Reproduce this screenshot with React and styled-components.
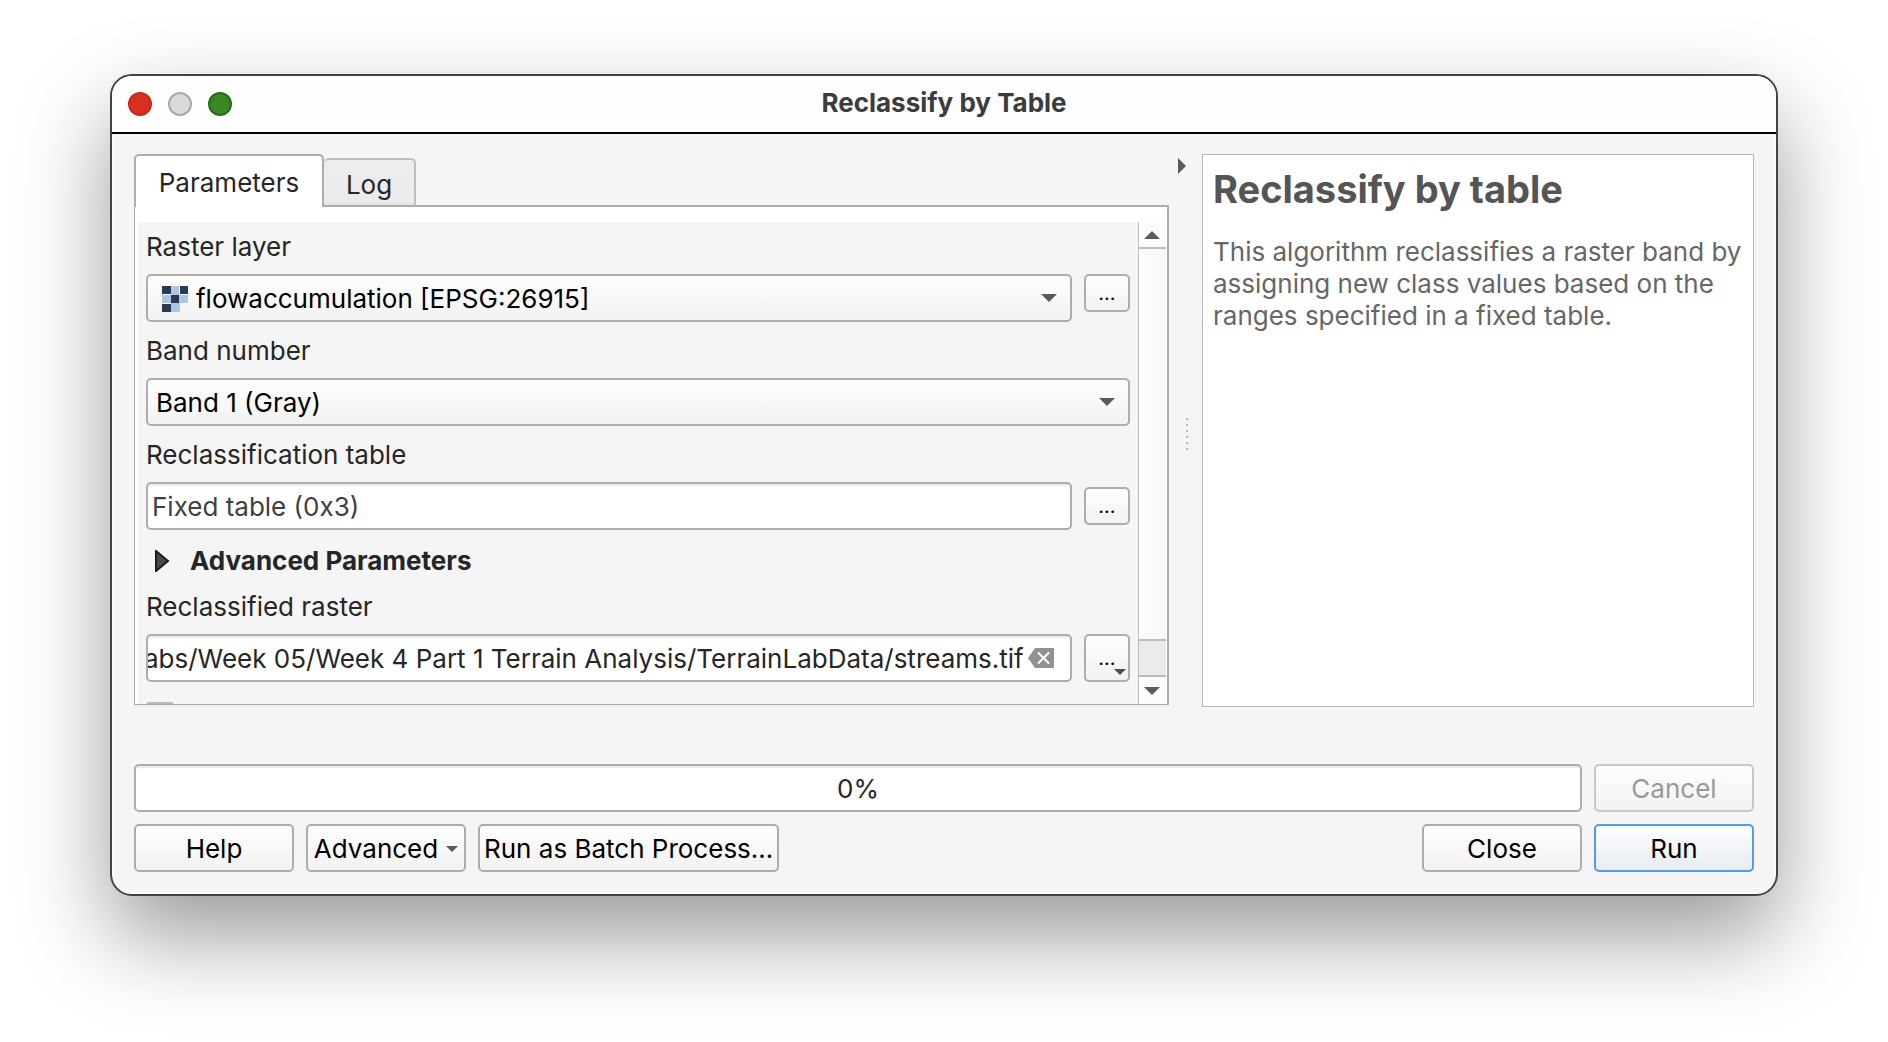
import React from "react";
import styled, { createGlobalStyle, css } from "styled-components";

const GlobalStyle = createGlobalStyle`
  *, *::before, *::after { box-sizing: border-box; }
  body {
    margin: 0;
    background: #ffffff;
    font-family: Inter, "Liberation Sans", sans-serif;
    font-size: 26px;
    line-height: 32px;
    color: #262626;
  }
  button, input, select { font: inherit; color: inherit; margin: 0; }
`;

const line = "#adadad";
const face = "linear-gradient(#fefefe, #f2f2f2)";

const Desktop = styled.main`
  display: flex;
  height: 100vh;
  min-height: 800px;
  padding: 74px 110px 146px;
  overflow: hidden;
`;

const Window = styled.section`
  flex: 1;
  min-width: 0;
  display: flex;
  flex-direction: column;
  border: 2px solid #434343;
  border-radius: 22px;
  background: #f5f5f5;
  overflow: hidden;
  box-shadow: inset 0 0 0 2px #fbfbfb, 0 40px 90px rgba(0, 0, 0, 0.4);
`;

const TitleBar = styled.header`
  display: grid;
  grid-template-columns: 1fr auto 1fr;
  align-items: center;
  height: 58px;
  padding: 0 16px;
  background: #fdfdfd;
  border-bottom: 2px solid #000000;
`;

const Lights = styled.div`
  display: flex;
  gap: 16px;
`;

const Light = styled.button`
  width: 24px;
  height: 24px;
  padding: 0;
  border: 2px solid ${(p) => p.$edge};
  border-radius: 50%;
  background: ${(p) => p.$fill};
`;

const Title = styled.h1`
  margin: 0;
  padding-bottom: 2px;
  font-size: 26px;
  line-height: 32px;
  font-weight: 700;
  color: #3c3c3c;
`;

const Body = styled.div`
  flex: 1;
  min-height: 0;
  display: flex;
  flex-direction: column;
  padding: 20px 22px 22px;
`;

const Split = styled.div`
  flex: 1;
  min-height: 0;
  display: grid;
  grid-template-columns: minmax(0, 1035fr) 33px minmax(0, 552fr);
  margin-bottom: 57px;
`;

const Tabbed = styled.div`
  display: flex;
  flex-direction: column;
  min-height: 0;
  padding-bottom: 2px;
`;

const TabList = styled.div`
  display: flex;
  align-items: flex-end;
  z-index: 1;
`;

const Tab = styled.button`
  height: ${(p) => (p.$active ? 53 : 47)}px;
  width: ${(p) => (p.$active ? 190 : 92)}px;
  padding: ${(p) => (p.$active ? 2 : 4)}px 0 0;
  margin-bottom: ${(p) => (p.$active ? -2 : 0)}px;
  border: 2px solid ${(p) => (p.$active ? line : "#bfbfbf")};
  border-bottom: 0;
  border-left-width: ${(p) => (p.$active ? 2 : 0)}px;
  border-radius: 5px 5px 0 0;
  background: ${(p) => (p.$active ? "#ffffff" : "linear-gradient(#ededed, #ebebeb 90%, #e4e4e4)")};
`;

const Pane = styled.div`
  flex: 1;
  min-height: 0;
  display: flex;
  padding: 15px 1px 0 3px;
  border: 2px solid ${line};
  border-left-width: 1px;
  border-bottom-width: 1px;
  background: #ffffff;
  box-shadow: 0 2px 0 #ededed;
`;

const Form = styled.form`
  flex: 1;
  min-width: 0;
  display: flex;
  flex-direction: column;
  gap: 12px;
  padding: 8px 8px 0;
  overflow: hidden;
  background: #f5f5f5;

  & > * { flex-shrink: 0; }
`;

const Label = styled.label`
  height: 32px;
  line-height: 34px;
`;

const Row = styled.div`
  display: flex;
  align-items: ${(p) => p.$align || "center"};
  gap: 12px;
`;

const Control = styled.div`
  position: relative;
  flex: 1;
  min-width: 0;
  height: 48px;
`;

const Select = styled.select`
  appearance: none;
  width: 100%;
  height: 48px;
  padding: 2px 40px 0 ${(p) => (p.$icon ? 48 : 8)}px;
  border: 2px solid ${line};
  border-radius: 5px;
  background: ${face};
  color: #000000;
`;

const field = css`
  border: 2px solid ${line};
  border-radius: 5px;
  background: #ffffff;
  box-shadow: inset 0 2px 0 #ebebeb;
`;

const TextBox = styled.input`
  ${field}
  width: 100%;
  height: 48px;
  padding: 0 ${(p) => (p.$clear ? 44 : 4)}px 0 ${(p) => (p.$clear ? 0 : 4)}px;
  text-indent: ${(p) => (p.$clear ? -4 : 0)}px;
  color: ${(p) => (p.$clear ? "#262626" : "#404040")};
`;

const Overlay = styled.svg`
  position: absolute;
  top: ${(p) => p.$top}px;
  left: ${(p) => (p.$left === undefined ? "auto" : p.$left + "px")};
  right: ${(p) => (p.$right === undefined ? "auto" : p.$right + "px")};
  pointer-events: none;
`;

const ClearButton = styled.button`
  position: absolute;
  top: 14px;
  right: 18px;
  width: 26px;
  height: 20px;
  padding: 0;
  border: 0;
  background: none;

  svg { display: block; }
`;

const MoreButton = styled.button`
  position: relative;
  width: 46px;
  height: ${(p) => (p.$tall ? 48 : 38)}px;
  padding: 0;
  border: 2px solid ${line};
  border-radius: 5px;
  background: ${face};
  font-size: 20px;
  color: #000000;
`;

const Disclosure = styled.button`
  display: flex;
  align-items: center;
  gap: 20px;
  height: 36px;
  padding: 2px 9px 0;
  border: 0;
  background: none;
  font-weight: 700;
  text-align: left;
`;

const OpenOption = styled.label`
  display: flex;
  align-items: center;
  gap: 12px;
  height: 44px;
`;

const CheckBox = styled.input`
  appearance: none;
  width: 28px;
  height: 28px;
  border: 2px solid #bbbbbb;
  border-radius: 3px;
  background: #ffffff;
`;

const ScrollBar = styled.div`
  display: flex;
  flex-direction: column;
  width: 28px;
  border-left: 1px solid #bdbdbd;
  background: linear-gradient(90deg, #fdfdfd, #f8f8f8);
`;

const ScrollButton = styled.button`
  display: flex;
  align-items: center;
  justify-content: center;
  height: 27px;
  padding: 0 2px 0 0;
  border: 0 solid #bdbdbd;
  border-bottom-width: ${(p) => (p.$up ? 2 : 0)}px;
  background: #fcfcfc;
`;

const ScrollTrack = styled.div`
  flex: 1;
  display: flex;
  flex-direction: column;
  justify-content: flex-end;
`;

const ScrollThumb = styled.div`
  height: 38px;
  border: 2px solid #bdbdbd;
  border-width: 2px 0;
  background: #ebebeb;
`;

const Splitter = styled.div`
  display: flex;
  flex-direction: column;
  align-items: center;
  justify-content: space-between;
`;

const CollapseButton = styled.button`
  align-self: flex-start;
  display: flex;
  height: 16px;
  padding: 0;
  margin: 4px 0 0 9px;
  border: 0;
  background: none;
`;

const Grip = styled.div`
  display: grid;
  gap: 4px;
  margin-left: 2px;

  i {
    width: 2px;
    height: 2px;
    background: #b8b8b8;
  }
`;

const Spacer = styled.div`
  height: 14px;
`;

const HelpPane = styled.aside`
  padding: 10px;
  border: 1px solid #b9b9b9;
  background: #ffffff;
  color: #666666;

  h2 {
    margin: 0;
    font-size: 38px;
    line-height: 48px;
    font-weight: 700;
    color: #555555;
  }
  p { margin: 23px 0 0; }
`;

const Footer = styled.footer`
  display: grid;
  gap: 12px;
`;

const Progress = styled.div`
  ${field}
  flex: 1;
  height: 48px;
  line-height: 46px;
  text-align: center;
`;

const PushButton = styled.button`
  display: flex;
  align-items: center;
  justify-content: center;
  gap: 8px;
  min-width: 160px;
  height: 48px;
  padding: 2px 4px 0;
  border: 2px solid ${(p) => (p.$primary ? "#5399e4" : line)};
  border-radius: 5px;
  background: ${(p) => (p.$primary ? "linear-gradient(#fefefe, #e8ebf2)" : face)};
  color: #000000;
  white-space: nowrap;

  &:disabled {
    border-color: #c8c8c8;
    color: #999999;
  }
`;

const Push = styled.span`
  flex: 1;
`;

const shapes = {
  down: (w, h) => `M0 0H${w}L${w / 2} ${h}Z`,
  up: (w, h) => `M0 ${h}H${w}L${w / 2} 0Z`,
  right: (w, h) => `M0 0V${h}L${w} ${h / 2}Z`,
};

function Triangle({ dir = "down", w = 16, h = 8, fill = "#5a5a5a" }) {
  return (
    <svg width={w} height={h} aria-hidden="true">
      <path d={shapes[dir](w, h)} fill={fill} />
    </svg>
  );
}

function SelectArrow() {
  return (
    <Overlay $top={20} $right={15} width="16" height="8" aria-hidden="true">
      <path d={shapes.down(16, 8)} fill="#5a5a5a" />
    </Overlay>
  );
}

function RasterIcon() {
  return (
    <Overlay $top={12} $left={16} width="26" height="26" viewBox="0 0 26 26" aria-hidden="true">
      <path fill="#adc6e5" d="M9 0h8v9h9v8h-8v9H9v-9H0V9h9z" />
      <path fill="#2b3a50" d="M0 0h9v8H0zM18 0h8v8h-8zM9 9h8v8H9zM0 18h9v8H0z" />
    </Overlay>
  );
}

export default function App() {
  return (
    <Desktop>
      <GlobalStyle />
      <Window>
        <TitleBar>
          <Lights>
            <Light aria-label="Close window" $fill="#da2e20" $edge="#c4291c" />
            <Light aria-label="Minimize window" $fill="#dadada" $edge="#a9a9a9" />
            <Light aria-label="Zoom window" $fill="#3b8724" $edge="#2a6a17" />
          </Lights>
          <Title>Reclassify by Table</Title>
        </TitleBar>
        <Body>
          <Split>
            <Tabbed>
              <TabList role="tablist">
                <Tab role="tab" aria-selected="true" $active>Parameters</Tab>
                <Tab role="tab" aria-selected="false">Log</Tab>
              </TabList>
              <Pane>
                <Form onSubmit={(e) => e.preventDefault()}>
                  <Label htmlFor="raster">Raster layer</Label>
                  <Row $align="flex-start">
                    <Control>
                      <Select id="raster" $icon>
                        <option>flowaccumulation [EPSG:26915]</option>
                      </Select>
                      <RasterIcon />
                      <SelectArrow />
                    </Control>
                    <MoreButton type="button" aria-label="Browse raster layer">...</MoreButton>
                  </Row>
                  <Label htmlFor="band">Band number</Label>
                  <Row>
                    <Control>
                      <Select id="band">
                        <option>Band 1 (Gray)</option>
                      </Select>
                      <SelectArrow />
                    </Control>
                  </Row>
                  <Label htmlFor="table">Reclassification table</Label>
                  <Row>
                    <Control>
                      <TextBox id="table" readOnly value="Fixed table (0x3)" />
                    </Control>
                    <MoreButton type="button" aria-label="Edit table">...</MoreButton>
                  </Row>
                  <Disclosure type="button" aria-expanded="false">
                    <svg width="15" height="22" viewBox="0 0 15 22" aria-hidden="true">
                      <path d="M1 1V21L13 11Z" fill="#4a4a4a" stroke="#1c1c1c" strokeWidth="2" />
                    </svg>
                    Advanced Parameters
                  </Disclosure>
                  <Label htmlFor="output">Reclassified raster</Label>
                  <Row>
                    <Control>
                      <TextBox
                        id="output"
                        $clear
                        defaultValue="abs/Week 05/Week 4 Part 1 Terrain Analysis/TerrainLabData/streams.tif"
                      />
                      <ClearButton type="button" aria-label="Clear">
                        <svg width="26" height="20" viewBox="0 0 26 20">
                          <path d="M0 10L7 0H26V20H7Z" fill="#929292" />
                          <path d="M10 4.500L21 15.500M21 4.500L10 15.500" stroke="#fff" strokeWidth="2" />
                        </svg>
                      </ClearButton>
                    </Control>
                    <MoreButton type="button" $tall aria-label="Output options">
                      ...
                      <Overlay $top={33} $right={2} width="12" height="6" aria-hidden="true">
                        <path d={shapes.down(12, 6)} fill="#4f4f4f" />
                      </Overlay>
                    </MoreButton>
                  </Row>
                  <OpenOption>
                    <CheckBox type="checkbox" aria-label="Open output file" />
                  </OpenOption>
                </Form>
                <ScrollBar>
                  <ScrollButton $up type="button" aria-label="Scroll up"><Triangle dir="up" /></ScrollButton>
                  <ScrollTrack><ScrollThumb /></ScrollTrack>
                  <ScrollButton type="button" aria-label="Scroll down"><Triangle /></ScrollButton>
                </ScrollBar>
              </Pane>
            </Tabbed>
            <Splitter>
              <CollapseButton type="button" aria-label="Collapse help">
                <Triangle dir="right" w={8} h={16} />
              </CollapseButton>
              <Grip><i /><i /><i /><i /><i /><i /></Grip>
              <Spacer />
            </Splitter>
            <HelpPane>
              <h2>Reclassify by table</h2>
              <p>
                This algorithm reclassifies a raster band by assigning new class values based on the
                ranges specified in a fixed table.
              </p>
            </HelpPane>
          </Split>
          <Footer>
            <Row>
              <Progress role="progressbar" aria-valuenow={0} aria-valuemin={0} aria-valuemax={100}>0%</Progress>
              <PushButton disabled>Cancel</PushButton>
            </Row>
            <Row>
              <PushButton>Help</PushButton>
              <PushButton>Advanced <Triangle w={12} h={6} /></PushButton>
              <PushButton>Run as Batch Process…</PushButton>
              <Push />
              <PushButton>Close</PushButton>
              <PushButton $primary>Run</PushButton>
            </Row>
          </Footer>
        </Body>
      </Window>
    </Desktop>
  );
}
